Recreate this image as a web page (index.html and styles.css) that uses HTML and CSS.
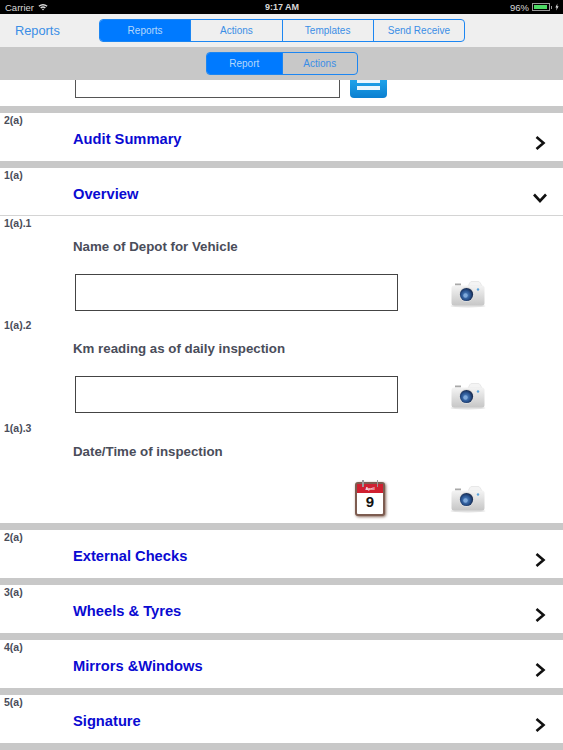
FILE: index.html
```html
<!DOCTYPE html>
<html lang="en">
<head>
    <meta charset="UTF-8">
    <meta name="viewport" content="width=device-width, initial-scale=1.0">
    <title>Reports</title>
    <link rel="stylesheet" href="styles.css">
</head>
<body>
    <svg class="defs" width="0" height="0" aria-hidden="true">
        <defs>
            <linearGradient id="camBody" x1="0" y1="0" x2="0" y2="1">
                <stop offset="0" stop-color="#f4f4f4"/>
                <stop offset="1" stop-color="#c6c6c6"/>
            </linearGradient>
            <radialGradient id="camLens" cx="0.45" cy="0.55" r="0.55">
                <stop offset="0" stop-color="#5a8fcc"/>
                <stop offset="0.6" stop-color="#2a5592"/>
                <stop offset="1" stop-color="#14264a"/>
            </radialGradient>
            <symbol id="camera" viewBox="0 0 36 28">
                <ellipse cx="18" cy="26" rx="17.5" ry="1.4" fill="#e2e2e2"/>
                <path d="M18 6 L20 2.5 Q20.5 1.5 22 1.5 H28 Q29.5 1.5 30 2.5 L32 6 Z" fill="#f4f4f4" stroke="#dcdcdc" stroke-width="0.6"/>
                <rect x="5" y="3.5" width="6" height="2" fill="#a8a8a8"/>
                <rect x="1.5" y="5.5" width="33" height="20" rx="2.5" fill="url(#camBody)"/>
                <circle cx="16.5" cy="14.5" r="7.6" fill="#dedede"/>
                <circle cx="16.5" cy="14.5" r="6.6" fill="url(#camLens)"/>
                <circle cx="15.5" cy="15.5" r="2.2" fill="#7fa9da"/>
                <circle cx="28" cy="9.5" r="1.2" fill="#5aa3dc"/>
            </symbol>
            <symbol id="right" viewBox="0 0 12 16">
                <path d="M2.5 2 L9.5 8 L2.5 14" fill="none" stroke="#111" stroke-width="2.6"/>
            </symbol>
            <symbol id="down" viewBox="0 0 16 12">
                <path d="M2 2.5 L8 9 L14 2.5" fill="none" stroke="#111" stroke-width="2.6"/>
            </symbol>
        </defs>
    </svg>

    <div class="status-bar">
        <div class="status-left">
            <span>Carrier</span>
            <svg class="wifi" viewBox="0 0 12 9" width="10" height="8">
                <path d="M0.5 3 Q6 -1.2 11.5 3 L10.3 4.2 Q6 1 1.7 4.2 Z" fill="#ddd"/>
                <path d="M2.6 5 Q6 2.4 9.4 5 L8.2 6.2 Q6 4.7 3.8 6.2 Z" fill="#ddd"/>
                <path d="M4.6 7 Q6 6 7.4 7 L6 8.6 Z" fill="#ddd"/>
            </svg>
        </div>
        <div class="status-time">9:17 AM</div>
        <div class="status-right">
            <span>96%</span>
            <span class="battery"><span class="battery-fill"></span></span>
            <span class="battery-tip"></span>
            <svg viewBox="0 0 5 9" width="4" height="8"><path d="M3 0 L0.5 5 H2 L1.5 9 L4.5 3.6 H2.8 Z" fill="#ddd"/></svg>
        </div>
    </div>

    <div class="nav-bar">
        <div class="nav-title">Reports</div>
        <div class="segments segments-main">
            <div class="segment active">Reports</div>
            <div class="segment">Actions</div>
            <div class="segment">Templates</div>
            <div class="segment">Send Receive</div>
        </div>
    </div>

    <div class="sub-bar">
        <div class="segments segments-sub">
            <div class="segment active">Report</div>
            <div class="segment">Actions</div>
        </div>
    </div>

    <div class="top-row">
        <div class="top-input"></div>
        <div class="save-button">
            <span class="save-line save-line-a"></span>
            <span class="save-line save-line-b"></span>
        </div>
    </div>

    <div class="band"></div>
    <div class="section">
        <div class="ref">2(a)</div>
        <div class="section-title">Audit Summary</div>
        <svg class="chevron-right"><use href="#right"/></svg>
    </div>
    <div class="band"></div>

    <div class="section section-open">
        <div class="ref">1(a)</div>
        <div class="section-title">Overview</div>
        <svg class="chevron-down"><use href="#down"/></svg>
    </div>

    <div class="question">
        <div class="ref">1(a).1</div>
        <div class="question-text">Name of Depot for Vehicle</div>
        <div class="answer">
            <div class="answer-field"><div class="text-box"></div></div>
            <svg class="camera"><use href="#camera"/></svg>
        </div>
    </div>

    <div class="question">
        <div class="ref">1(a).2</div>
        <div class="question-text">Km reading as of daily inspection</div>
        <div class="answer">
            <div class="answer-field"><div class="text-box"></div></div>
            <svg class="camera"><use href="#camera"/></svg>
        </div>
    </div>

    <div class="question">
        <div class="ref">1(a).3</div>
        <div class="question-text">Date/Time of inspection</div>
        <div class="answer">
            <div class="answer-field answer-date">
                <div class="calendar">
                    <div class="calendar-top">April</div>
                    <div class="calendar-day">9</div>
                </div>
            </div>
            <svg class="camera"><use href="#camera"/></svg>
        </div>
    </div>

    <div class="band"></div>
    <div class="section">
        <div class="ref">2(a)</div>
        <div class="section-title">External Checks</div>
        <svg class="chevron-right"><use href="#right"/></svg>
    </div>
    <div class="band"></div>
    <div class="section">
        <div class="ref">3(a)</div>
        <div class="section-title">Wheels &amp; Tyres</div>
        <svg class="chevron-right"><use href="#right"/></svg>
    </div>
    <div class="band"></div>
    <div class="section">
        <div class="ref">4(a)</div>
        <div class="section-title">Mirrors &amp;Windows</div>
        <svg class="chevron-right"><use href="#right"/></svg>
    </div>
    <div class="band"></div>
    <div class="section">
        <div class="ref">5(a)</div>
        <div class="section-title">Signature</div>
        <svg class="chevron-right"><use href="#right"/></svg>
    </div>
    <div class="band"></div>
</body>
</html>
```

FILE: styles.css
```css
html, body {
    margin: 0;
    height: 750px;
    overflow: hidden;
}
body {
    font-family: "Liberation Sans", Arial, sans-serif;
    background-color: #fff;
}
.defs {
    position: absolute;
}

/* status bar */
.status-bar {
    height: 14px;
    background-color: #000;
    color: #d8d8d8;
    font-size: 9.5px;
    display: grid;
    grid-template-columns: 1fr auto 1fr;
    align-items: center;
    padding: 0 4px 0 5px;
}
.status-left {
    display: flex;
    align-items: center;
    gap: 4px;
}
.status-time {
    font-weight: bold;
    font-size: 9px;
}
.status-right {
    display: flex;
    align-items: center;
    justify-content: flex-end;
    gap: 1px;
}
.battery {
    display: block;
    width: 14px;
    height: 4px;
    margin-left: 2px;
    border: 1px solid #999;
    padding: 1px;
}
.battery-fill {
    display: block;
    width: 96%;
    height: 100%;
    background-color: #4cd964;
}
.battery-tip {
    width: 1px;
    height: 3px;
    background-color: #999;
    margin-right: 2px;
}

/* nav */
.nav-bar {
    height: 33px;
    background-color: #efefef;
    display: flex;
    align-items: center;
    box-sizing: border-box;
    padding-left: 15px;
}
.nav-title {
    width: 84px;
    font-size: 12.8px;
    color: #3a8ee6;
}
.sub-bar {
    height: 33px;
    background-color: #c8c8c8;
    display: flex;
    align-items: center;
    padding-left: 206px;
}
.segments {
    display: flex;
    height: 23px;
    box-sizing: border-box;
    border: 1px solid #1c86f2;
    border-radius: 4px;
    overflow: hidden;
    font-size: 10px;
    color: #3a8ee6;
}
.segments-main {
    width: 366px;
}
.segments-sub {
    width: 152px;
}
.segment {
    flex: 1;
    display: flex;
    align-items: center;
    justify-content: center;
    border-left: 1px solid #1c86f2;
}
.segment:first-child {
    border-left: none;
}
.segment.active {
    background-color: #007aff;
    color: #b5d7fb;
}

/* content */
.top-row {
    height: 25.5px;
    display: flex;
    padding-left: 75px;
    gap: 10px;
}
.top-input {
    width: 265px;
    height: 18px;
    box-sizing: border-box;
    border: 1px solid #555;
    border-top: none;
}
.save-button {
    width: 37px;
    height: 18px;
    border-radius: 0 0 4px 4px;
    background: linear-gradient(#1fa3ea, #0b7fd0);
    display: flex;
    flex-direction: column;
    align-items: center;
    gap: 3px;
}
.save-line {
    width: 23px;
    background-color: #eaf6fd;
}
.save-line-a {
    height: 3px;
}
.save-line-b {
    height: 4px;
}
.band {
    height: 7px;
    background-color: #c8c8c8;
}
.section {
    height: 48px;
    position: relative;
    box-sizing: border-box;
}
.section-open {
    border-bottom: 1px solid #d4d4d4;
}
.ref {
    font-size: 10.5px;
    font-weight: bold;
    color: #4a4d5a;
    padding: 1px 0 0 4px;
    line-height: 12px;
}
.section-title {
    font-size: 14.7px;
    font-weight: bold;
    color: #0a0ad2;
    padding: 3px 0 0 73px;
    line-height: 20px;
}
.chevron-right {
    position: absolute;
    left: 534px;
    top: 22px;
    width: 12px;
    height: 16px;
}
.chevron-down {
    position: absolute;
    left: 532px;
    top: 24px;
    width: 16px;
    height: 12px;
}
.question {
    height: 102.5px;
    box-sizing: border-box;
}
.question-text {
    font-size: 13.3px;
    font-weight: bold;
    color: #4a4d5a;
    padding: 9px 0 0 73px;
    line-height: 18px;
}
.answer {
    display: flex;
    align-items: flex-start;
    padding: 18px 0 0 75px;
}
.answer-field {
    width: 323px;
}
.text-box {
    height: 37px;
    box-sizing: border-box;
    border: 1px solid #444;
}
.camera {
    width: 36px;
    height: 28px;
    margin: 6px 0 0 52px;
}
.answer-date {
    display: flex;
    justify-content: flex-end;
    padding-right: 13px;
    box-sizing: border-box;
}
.calendar {
    position: relative;
    width: 26px;
    height: 30px;
    margin-top: 3px;
    border: 2px solid #7d5c50;
    border-radius: 3px;
    box-shadow: 1px 1px 3px #8a6a5c;
    text-align: center;
    background-color: #fff;
}
.calendar::before,
.calendar::after {
    content: "";
    position: absolute;
    top: -4px;
    width: 1.5px;
    height: 7px;
    background-color: #9a9a9a;
}
.calendar::before {
    left: 5px;
}
.calendar::after {
    right: 5px;
}
.calendar-top {
    height: 9px;
    background-color: #cf2030;
    color: #fff;
    font-size: 4px;
    line-height: 10px;
    font-weight: bold;
}
.calendar-day {
    font-size: 15px;
    font-weight: bold;
    color: #111;
    line-height: 18px;
}
```
